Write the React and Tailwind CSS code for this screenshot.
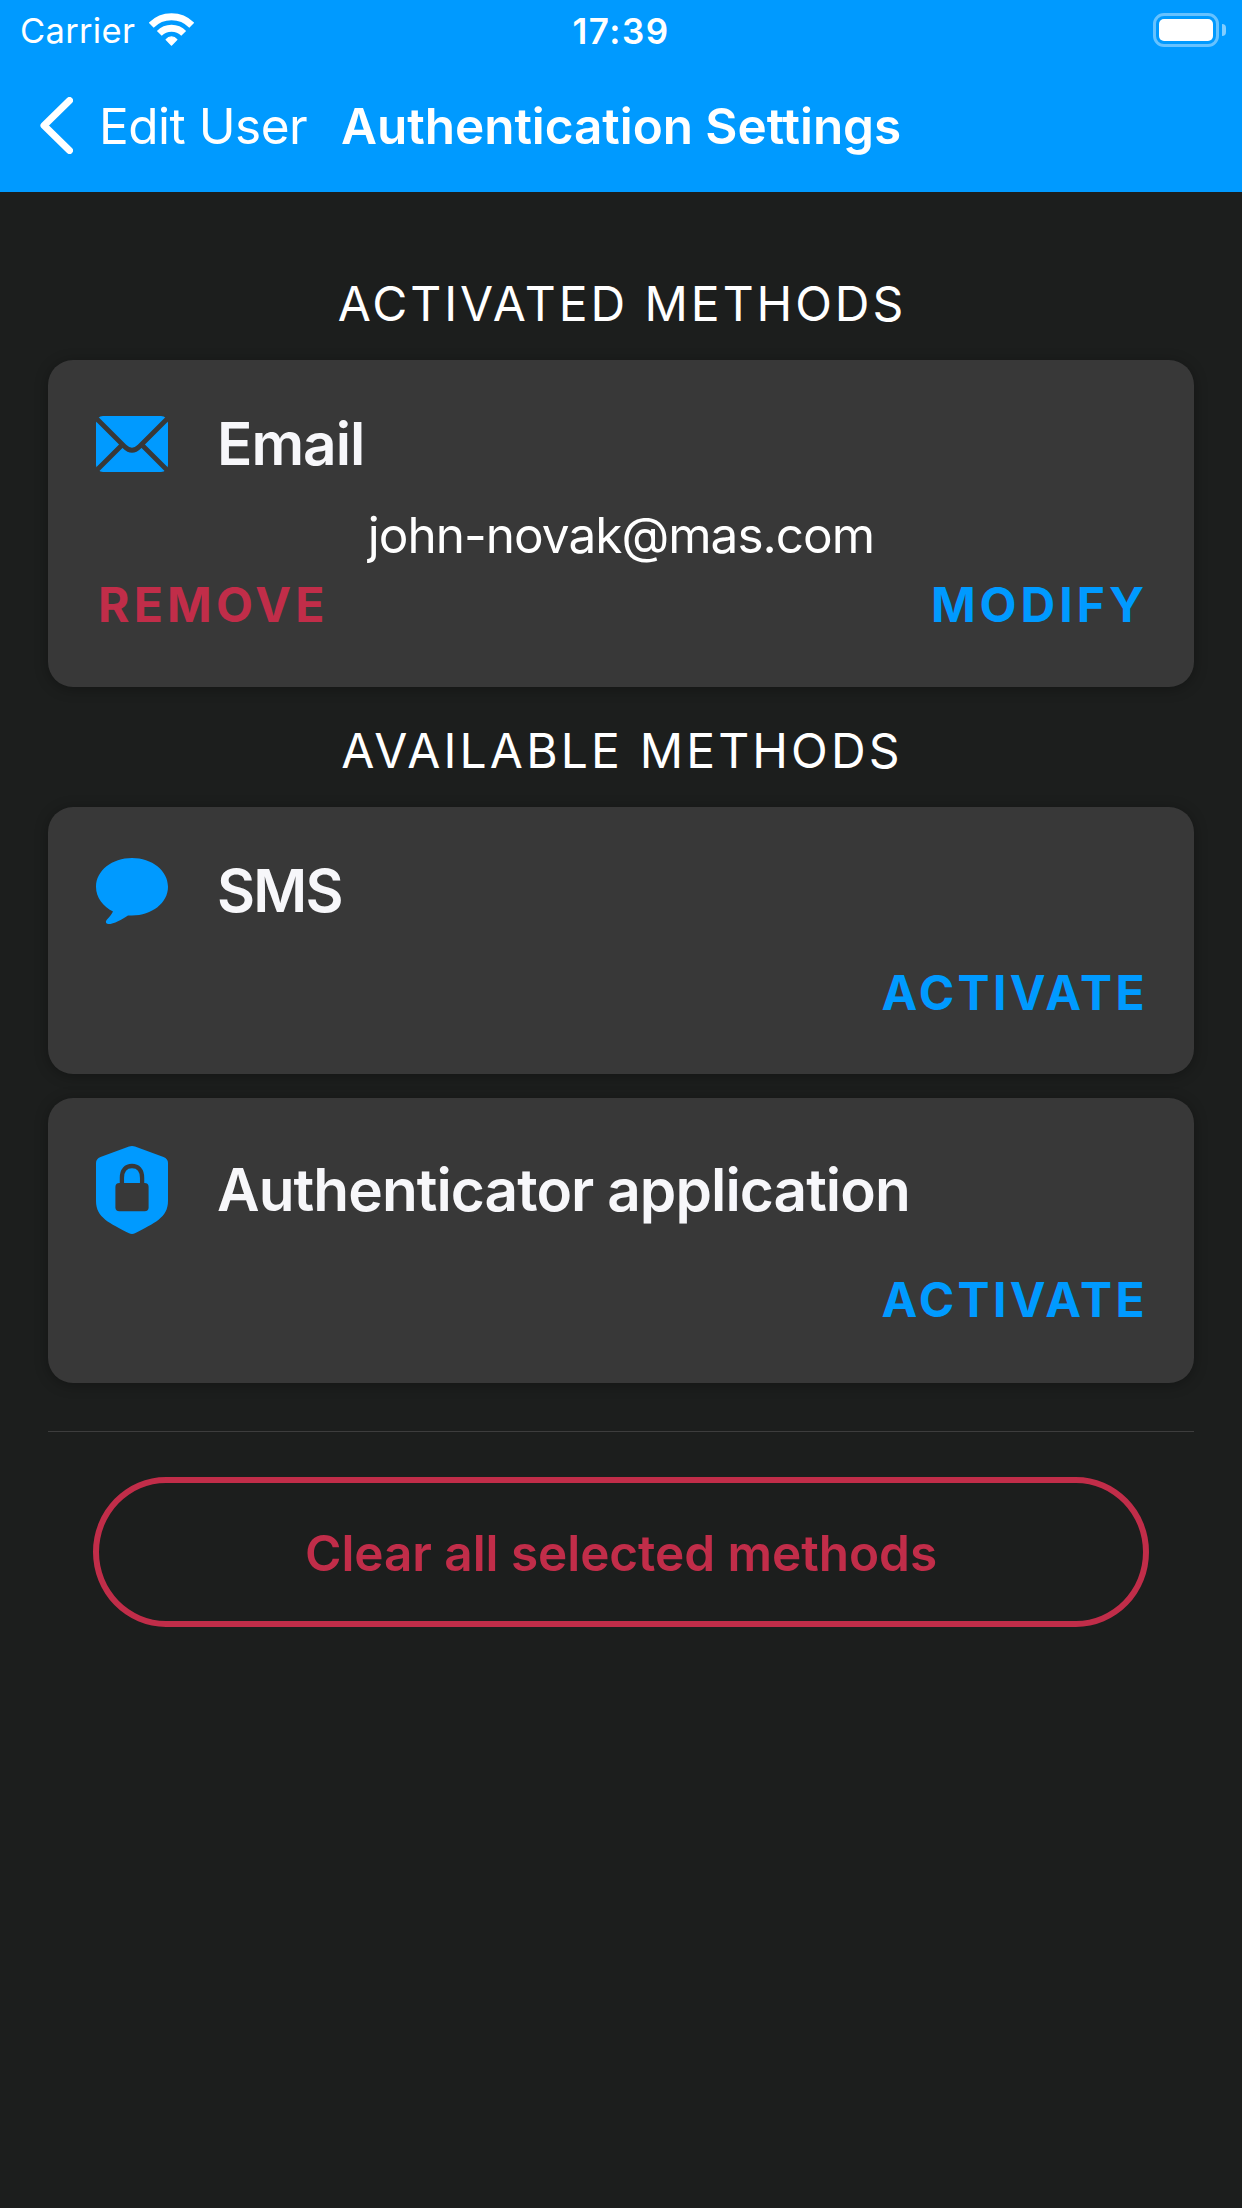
import React from 'react';

const WifiIcon = () => (
  <svg className="w-[45px] h-[33px]" viewBox="0 0 45 33" fill="none" stroke="white">
    <path d="M2.2 12.2A28.5 28.5 0 0 1 42.8 12.2" strokeWidth="7" />
    <path d="M10.3 20.4A17 17 0 0 1 34.7 20.4" strokeWidth="6.8" />
    <path d="M17.2 26.6C20.2 23 24.8 23 27.8 26.6L22.5 32Z" fill="white" strokeWidth="1.4" strokeLinejoin="round" />
  </svg>
);

const BatteryIcon = () => (
  <div className="flex items-center gap-[3px]">
    <div className="w-[66px] h-[34px] rounded-[11px] border-[3px] border-white/40 p-[3px]">
      <div className="w-full h-full rounded-[5px] bg-white"></div>
    </div>
    <div className="w-1 h-3 rounded-r-full bg-white/50"></div>
  </div>
);

const BackIcon = () => (
  <svg className="w-[33px] h-[57px]" viewBox="0 0 33 57" fill="none" stroke="white" strokeWidth="7" strokeLinecap="round" strokeLinejoin="round">
    <path d="M29.5 3.5L4 28.5L29.5 53.5" />
  </svg>
);

const EmailIcon = () => (
  <svg className="w-[72px] h-[56px]" viewBox="0 0 72 56" fill="none">
    <rect width="72" height="56" rx="7" fill="#009aff" />
    <path d="M-2 0L28.5 30.5Q36 38 43.5 30.5L74 0" stroke="#383838" strokeWidth="4.8" />
    <path d="M-2 57L26.5 28.5M74 57L45.5 28.5" stroke="#383838" strokeWidth="4.8" />
  </svg>
);

const SmsIcon = () => (
  <svg className="w-[72px] h-[66px]" viewBox="0 0 72 66" fill="#009aff">
    <path d="M36 0C55.9 0 72 12.6 72 28.7S55.9 57.4 36 57.4H32C26 61.5 18 66 12.2 66C9.8 66 9.2 63.6 10.8 61.8C12.8 59.5 15.6 56.6 17 53.5C7 48.6 0 39.4 0 28.7C0 12.6 16.1 0 36 0Z" />
  </svg>
);

const ShieldIcon = () => (
  <svg className="w-[72px] h-[88px]" viewBox="0 0 72 88" fill="none">
    <path d="M33 .6Q36 -.4 39 .6L67.5 11Q72 12.8 72 17V55C72 72 58 77 39 87.3Q36 88.7 33 87.3C14 77 0 72 0 55V17Q0 12.8 4.5 11Z" fill="#009aff" />
    <path d="M25.9 40V32C25.9 24 30 20 36 20S46.1 24 46.1 32V40" stroke="#383838" strokeWidth="4.3" />
    <rect x="19.4" y="37" width="33.2" height="28.3" rx="4" fill="#383838" />
  </svg>
);

const SectionTitle = ({ children }) => (
  <h2 className="h-28 flex items-center justify-center pl-0.5 text-5xl leading-none text-white">{children}</h2>
);

const Card = ({ children }) => (
  <div className="flow-root bg-[#383838] rounded-[25px] px-12 pt-[42px] shadow-[0_2px_14px_rgba(0,0,0,0.3)]">{children}</div>
);

const App = () => {
  return (
    <div className="w-[1242px] h-[2208px] bg-[#1c1e1d] font-['Inter',sans-serif] leading-none whitespace-nowrap overflow-hidden">
      <header className="h-48 bg-[#009aff] text-white">
        <div className="h-[63px] grid grid-cols-[1fr_auto_1fr] items-center pl-5 pr-4">
          <div className="flex items-center gap-[14px]">
            <span className="text-[34.5px] tracking-[0.3px]">Carrier</span>
            <div className="pb-1"><WifiIcon /></div>
          </div>
          <span className="pr-1 text-[35px] font-semibold tracking-[1.5px]">17:39</span>
          <div className="flex justify-end pb-[3px]"><BatteryIcon /></div>
        </div>
        <div className="h-[126px] flex items-center pl-10">
          <div className="pb-px"><BackIcon /></div>
          <span className="ml-[26px] w-[242px] pt-0.5 text-[49.5px] tracking-[-0.5px]">Edit User</span>
          <h1 className="pt-0.5 text-[49.5px] font-semibold tracking-[-0.06px]">Authentication Settings</h1>
        </div>
      </header>

      <main className="px-12 pt-14">
        <SectionTitle>
          <span className="tracking-[2.95px]">ACTIVATED METHODS</span>
        </SectionTitle>
        <Card>
          <div className="h-[84px] flex items-center">
            <EmailIcon />
            <h3 className="ml-[49px] text-[58.5px] font-semibold tracking-[-1px] text-[#f7f7fa]">Email</h3>
          </div>
          <p className="h-[97px] flex items-center justify-center pt-0.5 text-[49.5px] tracking-[-0.99px] text-white">john-novak@mas.com</p>
          <div className="h-[43px] flex items-center justify-between pl-0.5 -mr-0.5 mb-[61px] text-5xl leading-none font-bold">
            <button className="tracking-[4.2px] text-[#c12d49]">REMOVE</button>
            <button className="tracking-[4px] text-[#009aff]">MODIFY</button>
          </div>
        </Card>

        <div className="mt-2">
          <SectionTitle>
            <span className="tracking-[3.15px]">AVAILABLE METHODS</span>
          </SectionTitle>
        </div>
        <div className="flex flex-col gap-6">
          <Card>
            <div className="h-[84px] flex items-center">
              <SmsIcon />
              <h3 className="ml-[49px] text-[58.5px] font-semibold tracking-[-1.7px] text-[#f7f7fa]">SMS</h3>
            </div>
            <div className="h-[43px] flex items-center justify-end mt-[38px] -mr-0.5 mb-[60px] text-5xl leading-none font-bold">
              <button className="tracking-[3.36px] text-[#009aff]">ACTIVATE</button>
            </div>
          </Card>
          <Card>
            <div className="h-[100px] flex items-center">
              <ShieldIcon />
              <h3 className="ml-[49px] text-[58.5px] font-semibold tracking-[-0.93px] text-[#f7f7fa]">Authenticator application</h3>
            </div>
            <div className="h-[43px] flex items-center justify-end mt-[38px] -mr-0.5 mb-[62px] text-5xl leading-none font-bold">
              <button className="tracking-[3.36px] text-[#009aff]">ACTIVATE</button>
            </div>
          </Card>
        </div>

        <hr className="mt-12 border-[#3d3d3d]" />
        <div className="mt-[45px] px-[45px]">
          <button className="w-full h-[150px] pt-1 rounded-[73px/75px] border-[6px] border-[#c12d49] text-[49.5px] font-semibold tracking-[-0.06px] text-[#c12d49]">
            Clear all selected methods
          </button>
        </div>
      </main>
    </div>
  );
};

export default App;
